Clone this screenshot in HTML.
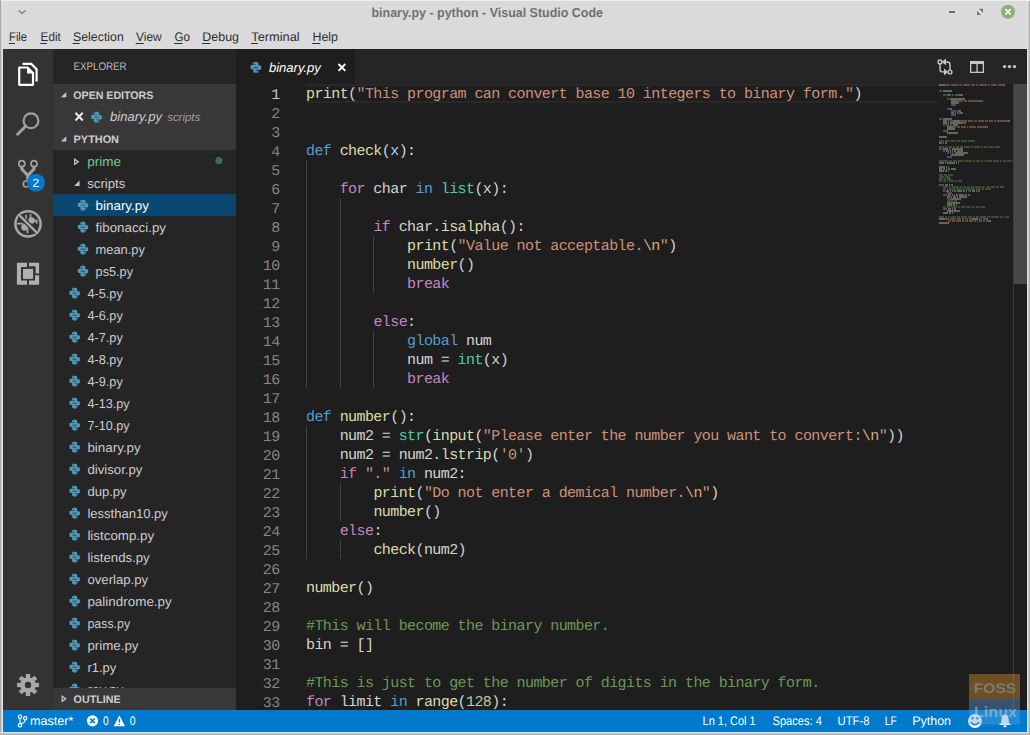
<!DOCTYPE html>
<html><head><meta charset="utf-8"><title>binary.py - python - Visual Studio Code</title>
<style>html,body{margin:0;padding:0;background:#dadada;overflow:hidden;width:1030px;height:735px}svg{display:block}</style>
</head><body>
<svg width="1030" height="735" viewBox="0 0 1030 735" shape-rendering="auto" text-rendering="geometricPrecision">
<rect x="0" y="0" width="1030" height="735" fill="#dadada" />
<rect x="0" y="0" width="1030" height="1" fill="#eef0ee" />
<rect x="0" y="0" width="1" height="735" fill="#a9a9a9" />
<rect x="1" y="1" width="1" height="735" fill="#cfcfcf" />
<rect x="2" y="1" width="1" height="735" fill="#e4e4e4" />
<rect x="1027" y="1" width="1" height="735" fill="#e4e2df" />
<rect x="1028" y="1" width="1" height="735" fill="#cacaca" />
<rect x="1029" y="1" width="1" height="735" fill="#b0b0b0" />
<rect x="0" y="732" width="1028" height="1" fill="#e2e0dd" />
<rect x="0" y="733" width="1030" height="1" fill="#c8c8c8" />
<rect x="0" y="734" width="1030" height="1" fill="#acacac" />
<path d="M18.5 10.5 L22 13.4 L25.5 10.5" stroke="#8a8a8a" stroke-width="1.6" fill="none"/>
<text x="371.5" y="16.5" font-family='"Liberation Sans", sans-serif' font-size="13" fill="#707070" font-weight="bold" font-style="normal" text-anchor="start" textLength="231.5" lengthAdjust="spacingAndGlyphs" >binary.py - python - Visual Studio Code</text>
<rect x="949" y="11" width="6" height="2" fill="#6a6a6a" />
<path d="M977 15 L977 11 L981 15 Z M983 8.7 L983 12.7 L979 8.7 Z" fill="#6f6f6f"/>
<circle cx="1008" cy="11.8" r="7" fill="#8db07b"/>
<path d="M1005.3 9.1 L1010.7 14.5 M1010.7 9.1 L1005.3 14.5" stroke="#fff" stroke-width="1.6"/>
<text x="9.1" y="40.7" font-family='"Liberation Sans", sans-serif' font-size="12.5" fill="#2e2e2e" font-weight="normal" font-style="normal" text-anchor="start" textLength="17.9" lengthAdjust="spacingAndGlyphs" >File</text>
<rect x="8.799999999999999" y="43" width="6.2" height="1" fill="#2e2e2e" />
<text x="40.6" y="40.7" font-family='"Liberation Sans", sans-serif' font-size="12.5" fill="#2e2e2e" font-weight="normal" font-style="normal" text-anchor="start" textLength="20.2" lengthAdjust="spacingAndGlyphs" >Edit</text>
<rect x="40.300000000000004" y="43" width="6.6" height="1" fill="#2e2e2e" />
<text x="73" y="40.7" font-family='"Liberation Sans", sans-serif' font-size="12.5" fill="#2e2e2e" font-weight="normal" font-style="normal" text-anchor="start" textLength="50.8" lengthAdjust="spacingAndGlyphs" >Selection</text>
<rect x="72.7" y="43" width="7" height="1" fill="#2e2e2e" />
<text x="136" y="40.7" font-family='"Liberation Sans", sans-serif' font-size="12.5" fill="#2e2e2e" font-weight="normal" font-style="normal" text-anchor="start" textLength="25.7" lengthAdjust="spacingAndGlyphs" >View</text>
<rect x="135.7" y="43" width="8" height="1" fill="#2e2e2e" />
<text x="174.4" y="40.7" font-family='"Liberation Sans", sans-serif' font-size="12.5" fill="#2e2e2e" font-weight="normal" font-style="normal" text-anchor="start" textLength="15.6" lengthAdjust="spacingAndGlyphs" >Go</text>
<rect x="174.1" y="43" width="8.5" height="1" fill="#2e2e2e" />
<text x="202.3" y="40.7" font-family='"Liberation Sans", sans-serif' font-size="12.5" fill="#2e2e2e" font-weight="normal" font-style="normal" text-anchor="start" textLength="36.7" lengthAdjust="spacingAndGlyphs" >Debug</text>
<rect x="202.0" y="43" width="8.5" height="1" fill="#2e2e2e" />
<text x="251.3" y="40.7" font-family='"Liberation Sans", sans-serif' font-size="12.5" fill="#2e2e2e" font-weight="normal" font-style="normal" text-anchor="start" textLength="48.4" lengthAdjust="spacingAndGlyphs" >Terminal</text>
<rect x="251.0" y="43" width="7" height="1" fill="#2e2e2e" />
<text x="312.5" y="40.7" font-family='"Liberation Sans", sans-serif' font-size="12.5" fill="#2e2e2e" font-weight="normal" font-style="normal" text-anchor="start" textLength="25.5" lengthAdjust="spacingAndGlyphs" >Help</text>
<rect x="312.2" y="43" width="8" height="1" fill="#2e2e2e" />
<rect x="3" y="49" width="1024" height="683" fill="#1e1e1e" />
<rect x="3" y="49" width="50" height="661" fill="#333333" />
<rect x="53" y="49" width="183" height="661" fill="#252526" />
<rect x="236" y="49" width="791" height="35" fill="#252526" />
<rect x="236" y="49" width="119" height="35" fill="#1e1e1e" />
<rect x="3" y="710" width="1024" height="22" fill="#007acc" />
<rect x="306" y="84" width="633" height="2" fill="#282828" />
<rect x="306" y="101" width="633" height="2" fill="#282828" />
<rect x="306" y="160" width="1" height="228" fill="#404040" />
<rect x="340" y="198" width="1" height="190" fill="#404040" />
<rect x="373" y="236" width="1" height="57" fill="#404040" />
<rect x="373" y="331" width="1" height="57" fill="#404040" />
<rect x="306" y="426" width="1" height="133" fill="#404040" />
<rect x="340" y="483" width="1" height="38" fill="#404040" />
<rect x="340" y="540" width="1" height="19" fill="#404040" />
<text x="279.6" y="98.6" font-family='"Liberation Mono", monospace' font-size="15" fill="#c6c6c6" font-weight="normal" font-style="normal" text-anchor="end" letter-spacing="-0.58">1</text>
<text x="279.6" y="117.6" font-family='"Liberation Mono", monospace' font-size="15" fill="#858585" font-weight="normal" font-style="normal" text-anchor="end" letter-spacing="-0.58">2</text>
<text x="279.6" y="136.6" font-family='"Liberation Mono", monospace' font-size="15" fill="#858585" font-weight="normal" font-style="normal" text-anchor="end" letter-spacing="-0.58">3</text>
<text x="279.6" y="155.6" font-family='"Liberation Mono", monospace' font-size="15" fill="#858585" font-weight="normal" font-style="normal" text-anchor="end" letter-spacing="-0.58">4</text>
<text x="279.6" y="174.6" font-family='"Liberation Mono", monospace' font-size="15" fill="#858585" font-weight="normal" font-style="normal" text-anchor="end" letter-spacing="-0.58">5</text>
<text x="279.6" y="193.6" font-family='"Liberation Mono", monospace' font-size="15" fill="#858585" font-weight="normal" font-style="normal" text-anchor="end" letter-spacing="-0.58">6</text>
<text x="279.6" y="212.6" font-family='"Liberation Mono", monospace' font-size="15" fill="#858585" font-weight="normal" font-style="normal" text-anchor="end" letter-spacing="-0.58">7</text>
<text x="279.6" y="231.6" font-family='"Liberation Mono", monospace' font-size="15" fill="#858585" font-weight="normal" font-style="normal" text-anchor="end" letter-spacing="-0.58">8</text>
<text x="279.6" y="250.6" font-family='"Liberation Mono", monospace' font-size="15" fill="#858585" font-weight="normal" font-style="normal" text-anchor="end" letter-spacing="-0.58">9</text>
<text x="279.6" y="269.6" font-family='"Liberation Mono", monospace' font-size="15" fill="#858585" font-weight="normal" font-style="normal" text-anchor="end" letter-spacing="-0.58">10</text>
<text x="279.6" y="288.6" font-family='"Liberation Mono", monospace' font-size="15" fill="#858585" font-weight="normal" font-style="normal" text-anchor="end" letter-spacing="-0.58">11</text>
<text x="279.6" y="307.6" font-family='"Liberation Mono", monospace' font-size="15" fill="#858585" font-weight="normal" font-style="normal" text-anchor="end" letter-spacing="-0.58">12</text>
<text x="279.6" y="326.6" font-family='"Liberation Mono", monospace' font-size="15" fill="#858585" font-weight="normal" font-style="normal" text-anchor="end" letter-spacing="-0.58">13</text>
<text x="279.6" y="345.6" font-family='"Liberation Mono", monospace' font-size="15" fill="#858585" font-weight="normal" font-style="normal" text-anchor="end" letter-spacing="-0.58">14</text>
<text x="279.6" y="364.6" font-family='"Liberation Mono", monospace' font-size="15" fill="#858585" font-weight="normal" font-style="normal" text-anchor="end" letter-spacing="-0.58">15</text>
<text x="279.6" y="383.6" font-family='"Liberation Mono", monospace' font-size="15" fill="#858585" font-weight="normal" font-style="normal" text-anchor="end" letter-spacing="-0.58">16</text>
<text x="279.6" y="402.6" font-family='"Liberation Mono", monospace' font-size="15" fill="#858585" font-weight="normal" font-style="normal" text-anchor="end" letter-spacing="-0.58">17</text>
<text x="279.6" y="421.6" font-family='"Liberation Mono", monospace' font-size="15" fill="#858585" font-weight="normal" font-style="normal" text-anchor="end" letter-spacing="-0.58">18</text>
<text x="279.6" y="440.6" font-family='"Liberation Mono", monospace' font-size="15" fill="#858585" font-weight="normal" font-style="normal" text-anchor="end" letter-spacing="-0.58">19</text>
<text x="279.6" y="459.6" font-family='"Liberation Mono", monospace' font-size="15" fill="#858585" font-weight="normal" font-style="normal" text-anchor="end" letter-spacing="-0.58">20</text>
<text x="279.6" y="478.6" font-family='"Liberation Mono", monospace' font-size="15" fill="#858585" font-weight="normal" font-style="normal" text-anchor="end" letter-spacing="-0.58">21</text>
<text x="279.6" y="497.6" font-family='"Liberation Mono", monospace' font-size="15" fill="#858585" font-weight="normal" font-style="normal" text-anchor="end" letter-spacing="-0.58">22</text>
<text x="279.6" y="516.6" font-family='"Liberation Mono", monospace' font-size="15" fill="#858585" font-weight="normal" font-style="normal" text-anchor="end" letter-spacing="-0.58">23</text>
<text x="279.6" y="535.6" font-family='"Liberation Mono", monospace' font-size="15" fill="#858585" font-weight="normal" font-style="normal" text-anchor="end" letter-spacing="-0.58">24</text>
<text x="279.6" y="554.6" font-family='"Liberation Mono", monospace' font-size="15" fill="#858585" font-weight="normal" font-style="normal" text-anchor="end" letter-spacing="-0.58">25</text>
<text x="279.6" y="573.6" font-family='"Liberation Mono", monospace' font-size="15" fill="#858585" font-weight="normal" font-style="normal" text-anchor="end" letter-spacing="-0.58">26</text>
<text x="279.6" y="592.6" font-family='"Liberation Mono", monospace' font-size="15" fill="#858585" font-weight="normal" font-style="normal" text-anchor="end" letter-spacing="-0.58">27</text>
<text x="279.6" y="611.6" font-family='"Liberation Mono", monospace' font-size="15" fill="#858585" font-weight="normal" font-style="normal" text-anchor="end" letter-spacing="-0.58">28</text>
<text x="279.6" y="630.6" font-family='"Liberation Mono", monospace' font-size="15" fill="#858585" font-weight="normal" font-style="normal" text-anchor="end" letter-spacing="-0.58">29</text>
<text x="279.6" y="649.6" font-family='"Liberation Mono", monospace' font-size="15" fill="#858585" font-weight="normal" font-style="normal" text-anchor="end" letter-spacing="-0.58">30</text>
<text x="279.6" y="668.6" font-family='"Liberation Mono", monospace' font-size="15" fill="#858585" font-weight="normal" font-style="normal" text-anchor="end" letter-spacing="-0.58">31</text>
<text x="279.6" y="687.6" font-family='"Liberation Mono", monospace' font-size="15" fill="#858585" font-weight="normal" font-style="normal" text-anchor="end" letter-spacing="-0.58">32</text>
<text x="279.6" y="706.6" font-family='"Liberation Mono", monospace' font-size="15" fill="#858585" font-weight="normal" font-style="normal" text-anchor="end" letter-spacing="-0.58">33</text>
<text x="306" y="97.9" font-family='"Liberation Mono", monospace' font-size="15" letter-spacing="-0.58" xml:space="preserve" style="white-space:pre"><tspan fill="#dcdcaa">print</tspan><tspan fill="#d4d4d4">(</tspan><tspan fill="#ce9178">"This program can convert base 10 integers to binary form."</tspan><tspan fill="#d4d4d4">)</tspan></text>
<text x="306" y="154.9" font-family='"Liberation Mono", monospace' font-size="15" letter-spacing="-0.58" xml:space="preserve" style="white-space:pre"><tspan fill="#569cd6">def</tspan><tspan fill="#d4d4d4"> </tspan><tspan fill="#dcdcaa">check</tspan><tspan fill="#d4d4d4">(</tspan><tspan fill="#9cdcfe">x</tspan><tspan fill="#d4d4d4">):</tspan></text>
<text x="306" y="192.9" font-family='"Liberation Mono", monospace' font-size="15" letter-spacing="-0.58" xml:space="preserve" style="white-space:pre"><tspan fill="#d4d4d4">    </tspan><tspan fill="#c586c0">for</tspan><tspan fill="#d4d4d4"> char </tspan><tspan fill="#569cd6">in</tspan><tspan fill="#d4d4d4"> </tspan><tspan fill="#4ec9b0">list</tspan><tspan fill="#d4d4d4">(x):</tspan></text>
<text x="306" y="230.9" font-family='"Liberation Mono", monospace' font-size="15" letter-spacing="-0.58" xml:space="preserve" style="white-space:pre"><tspan fill="#d4d4d4">        </tspan><tspan fill="#c586c0">if</tspan><tspan fill="#d4d4d4"> char.</tspan><tspan fill="#dcdcaa">isalpha</tspan><tspan fill="#d4d4d4">():</tspan></text>
<text x="306" y="249.9" font-family='"Liberation Mono", monospace' font-size="15" letter-spacing="-0.58" xml:space="preserve" style="white-space:pre"><tspan fill="#d4d4d4">            </tspan><tspan fill="#dcdcaa">print</tspan><tspan fill="#d4d4d4">(</tspan><tspan fill="#ce9178">"Value not acceptable.</tspan><tspan fill="#d9aa7a">\n</tspan><tspan fill="#ce9178">"</tspan><tspan fill="#d4d4d4">)</tspan></text>
<text x="306" y="268.9" font-family='"Liberation Mono", monospace' font-size="15" letter-spacing="-0.58" xml:space="preserve" style="white-space:pre"><tspan fill="#d4d4d4">            </tspan><tspan fill="#dcdcaa">number</tspan><tspan fill="#d4d4d4">()</tspan></text>
<text x="306" y="287.9" font-family='"Liberation Mono", monospace' font-size="15" letter-spacing="-0.58" xml:space="preserve" style="white-space:pre"><tspan fill="#d4d4d4">            </tspan><tspan fill="#c586c0">break</tspan></text>
<text x="306" y="325.9" font-family='"Liberation Mono", monospace' font-size="15" letter-spacing="-0.58" xml:space="preserve" style="white-space:pre"><tspan fill="#d4d4d4">        </tspan><tspan fill="#c586c0">else</tspan><tspan fill="#d4d4d4">:</tspan></text>
<text x="306" y="344.9" font-family='"Liberation Mono", monospace' font-size="15" letter-spacing="-0.58" xml:space="preserve" style="white-space:pre"><tspan fill="#d4d4d4">            </tspan><tspan fill="#569cd6">global</tspan><tspan fill="#d4d4d4"> num</tspan></text>
<text x="306" y="363.9" font-family='"Liberation Mono", monospace' font-size="15" letter-spacing="-0.58" xml:space="preserve" style="white-space:pre"><tspan fill="#d4d4d4">            </tspan><tspan fill="#d4d4d4">num = </tspan><tspan fill="#4ec9b0">int</tspan><tspan fill="#d4d4d4">(x)</tspan></text>
<text x="306" y="382.9" font-family='"Liberation Mono", monospace' font-size="15" letter-spacing="-0.58" xml:space="preserve" style="white-space:pre"><tspan fill="#d4d4d4">            </tspan><tspan fill="#c586c0">break</tspan></text>
<text x="306" y="420.9" font-family='"Liberation Mono", monospace' font-size="15" letter-spacing="-0.58" xml:space="preserve" style="white-space:pre"><tspan fill="#569cd6">def</tspan><tspan fill="#d4d4d4"> </tspan><tspan fill="#dcdcaa">number</tspan><tspan fill="#d4d4d4">():</tspan></text>
<text x="306" y="439.9" font-family='"Liberation Mono", monospace' font-size="15" letter-spacing="-0.58" xml:space="preserve" style="white-space:pre"><tspan fill="#d4d4d4">    num2 = </tspan><tspan fill="#4ec9b0">str</tspan><tspan fill="#d4d4d4">(</tspan><tspan fill="#dcdcaa">input</tspan><tspan fill="#d4d4d4">(</tspan><tspan fill="#ce9178">"Please enter the number you want to convert:</tspan><tspan fill="#d9aa7a">\n</tspan><tspan fill="#ce9178">"</tspan><tspan fill="#d4d4d4">))</tspan></text>
<text x="306" y="458.9" font-family='"Liberation Mono", monospace' font-size="15" letter-spacing="-0.58" xml:space="preserve" style="white-space:pre"><tspan fill="#d4d4d4">    num2 = num2.</tspan><tspan fill="#dcdcaa">lstrip</tspan><tspan fill="#d4d4d4">(</tspan><tspan fill="#ce9178">'0'</tspan><tspan fill="#d4d4d4">)</tspan></text>
<text x="306" y="477.9" font-family='"Liberation Mono", monospace' font-size="15" letter-spacing="-0.58" xml:space="preserve" style="white-space:pre"><tspan fill="#d4d4d4">    </tspan><tspan fill="#c586c0">if</tspan><tspan fill="#d4d4d4"> </tspan><tspan fill="#ce9178">"."</tspan><tspan fill="#d4d4d4"> </tspan><tspan fill="#569cd6">in</tspan><tspan fill="#d4d4d4"> num2:</tspan></text>
<text x="306" y="496.9" font-family='"Liberation Mono", monospace' font-size="15" letter-spacing="-0.58" xml:space="preserve" style="white-space:pre"><tspan fill="#d4d4d4">        </tspan><tspan fill="#dcdcaa">print</tspan><tspan fill="#d4d4d4">(</tspan><tspan fill="#ce9178">"Do not enter a demical number.</tspan><tspan fill="#d9aa7a">\n</tspan><tspan fill="#ce9178">"</tspan><tspan fill="#d4d4d4">)</tspan></text>
<text x="306" y="515.9" font-family='"Liberation Mono", monospace' font-size="15" letter-spacing="-0.58" xml:space="preserve" style="white-space:pre"><tspan fill="#d4d4d4">        </tspan><tspan fill="#dcdcaa">number</tspan><tspan fill="#d4d4d4">()</tspan></text>
<text x="306" y="534.9" font-family='"Liberation Mono", monospace' font-size="15" letter-spacing="-0.58" xml:space="preserve" style="white-space:pre"><tspan fill="#d4d4d4">    </tspan><tspan fill="#c586c0">else</tspan><tspan fill="#d4d4d4">:</tspan></text>
<text x="306" y="553.9" font-family='"Liberation Mono", monospace' font-size="15" letter-spacing="-0.58" xml:space="preserve" style="white-space:pre"><tspan fill="#d4d4d4">        </tspan><tspan fill="#dcdcaa">check</tspan><tspan fill="#d4d4d4">(num2)</tspan></text>
<text x="306" y="591.9" font-family='"Liberation Mono", monospace' font-size="15" letter-spacing="-0.58" xml:space="preserve" style="white-space:pre"><tspan fill="#dcdcaa">number</tspan><tspan fill="#d4d4d4">()</tspan></text>
<text x="306" y="629.9" font-family='"Liberation Mono", monospace' font-size="15" letter-spacing="-0.58" xml:space="preserve" style="white-space:pre"><tspan fill="#6a9955">#This will become the binary number.</tspan></text>
<text x="306" y="648.9" font-family='"Liberation Mono", monospace' font-size="15" letter-spacing="-0.58" xml:space="preserve" style="white-space:pre"><tspan fill="#d4d4d4">bin = []</tspan></text>
<text x="306" y="686.9" font-family='"Liberation Mono", monospace' font-size="15" letter-spacing="-0.58" xml:space="preserve" style="white-space:pre"><tspan fill="#6a9955">#This is just to get the number of digits in the binary form.</tspan></text>
<text x="306" y="705.9" font-family='"Liberation Mono", monospace' font-size="15" letter-spacing="-0.58" xml:space="preserve" style="white-space:pre"><tspan fill="#c586c0">for</tspan><tspan fill="#d4d4d4"> limit </tspan><tspan fill="#569cd6">in</tspan><tspan fill="#d4d4d4"> </tspan><tspan fill="#dcdcaa">range</tspan><tspan fill="#d4d4d4">(</tspan><tspan fill="#b5cea8">128</tspan><tspan fill="#d4d4d4">):</tspan></text>
<g transform="translate(250.5,62) scale(1.0)" fill="#519aba"><path d="M2.5 1.6 Q2.5 0 4.1 0 H6.3 Q7.9 0 7.9 1.6 V5.0 H3.2 V7.3 H1.4 Q0 7.3 0 5.9 V4.4 Q0 3.0 1.4 3.0 H5.6 V2.4 H2.5 Z"/><path d="M2.5 1.6 Q2.5 0 4.1 0 H6.3 Q7.9 0 7.9 1.6 V5.0 H3.2 V7.3 H1.4 Q0 7.3 0 5.9 V4.4 Q0 3.0 1.4 3.0 H5.6 V2.4 H2.5 Z" transform="rotate(180 5.35 5.4)"/><circle cx="3.9" cy="1.2" r="0.55" fill="#1e1e1e" fill-opacity="0.6"/><circle cx="6.8" cy="9.6" r="0.55" fill="#1e1e1e" fill-opacity="0.6"/></g>
<text x="268.9" y="72.2" font-family='"Liberation Sans", sans-serif' font-size="13" fill="#ffffff" font-weight="normal" font-style="italic" text-anchor="start" textLength="52" lengthAdjust="spacingAndGlyphs" >binary.py</text>
<path d="M338.5 64 L345.3 70.8 M345.3 64 L338.5 70.8" stroke="#ffffff" stroke-width="1.8"/>
<g stroke="#c5c5c5" stroke-width="1.4" fill="none"><circle cx="940" cy="61.9" r="1.9"/><circle cx="950" cy="72" r="1.9"/><path d="M940 63.8 V69.2 Q940 71.9 942.7 71.9 H944.5"/><path d="M950 70.1 V64.7 Q950 62 947.3 62 H945.5"/></g>
<path d="M944 68.6 L948.2 71.9 L944 75.2 Z M946 58.6 L941.8 61.9 L946 65.2 Z" fill="#c5c5c5"/>
<g fill="#c5c5c5"><rect x="970" y="61" width="14" height="3"/><rect x="970" y="61" width="1.3" height="12"/><rect x="982.7" y="61" width="1.3" height="12"/><rect x="970" y="71.7" width="14" height="1.3"/><rect x="976.4" y="61" width="1.3" height="12"/></g>
<circle cx="1004.5" cy="66.6" r="1.7" fill="#c5c5c5"/>
<circle cx="1009.5" cy="66.6" r="1.7" fill="#c5c5c5"/>
<circle cx="1014.5" cy="66.6" r="1.7" fill="#c5c5c5"/>
<rect x="1013" y="84" width="14" height="200" fill="#474747" />
<rect x="1013" y="84" width="1" height="626" fill="#3c3c3c" />
<text x="73.4" y="70.2" font-family='"Liberation Sans", sans-serif' font-size="11" fill="#bbbbbb" font-weight="normal" font-style="normal" text-anchor="start" textLength="53.3" lengthAdjust="spacingAndGlyphs" >EXPLORER</text>
<rect x="53" y="84" width="183" height="66" fill="#383838" />
<rect x="53" y="688" width="183" height="22" fill="#383838" />
<path d="M66.3 92 L66.3 97.3 L61 97.3 Z" fill="#c5c5c5"/>
<text x="73.3" y="99" font-family='"Liberation Sans", sans-serif' font-size="11" fill="#cccccc" font-weight="bold" font-style="normal" text-anchor="start" textLength="80" lengthAdjust="spacingAndGlyphs" >OPEN EDITORS</text>
<path d="M75.5 112.8 L82.7 120.5 M82.7 112.8 L75.5 120.5" stroke="#e8e8e8" stroke-width="2"/>
<g transform="translate(91.2,111.8) scale(1.0)" fill="#519aba"><path d="M2.5 1.6 Q2.5 0 4.1 0 H6.3 Q7.9 0 7.9 1.6 V5.0 H3.2 V7.3 H1.4 Q0 7.3 0 5.9 V4.4 Q0 3.0 1.4 3.0 H5.6 V2.4 H2.5 Z"/><path d="M2.5 1.6 Q2.5 0 4.1 0 H6.3 Q7.9 0 7.9 1.6 V5.0 H3.2 V7.3 H1.4 Q0 7.3 0 5.9 V4.4 Q0 3.0 1.4 3.0 H5.6 V2.4 H2.5 Z" transform="rotate(180 5.35 5.4)"/><circle cx="3.9" cy="1.2" r="0.55" fill="#1e1e1e" fill-opacity="0.6"/><circle cx="6.8" cy="9.6" r="0.55" fill="#1e1e1e" fill-opacity="0.6"/></g>
<text x="110.1" y="121.3" font-family='"Liberation Sans", sans-serif' font-size="13" fill="#cccccc" font-weight="normal" font-style="italic" text-anchor="start" textLength="51.8" lengthAdjust="spacingAndGlyphs" >binary.py</text>
<text x="167.2" y="121.3" font-family='"Liberation Sans", sans-serif' font-size="11.5" fill="#9d9d9d" font-weight="normal" font-style="italic" text-anchor="start" textLength="33" lengthAdjust="spacingAndGlyphs" >scripts</text>
<path d="M66.3 136.3 L66.3 141.60000000000002 L61 141.60000000000002 Z" fill="#c5c5c5"/>
<text x="73.6" y="143" font-family='"Liberation Sans", sans-serif' font-size="11" fill="#cccccc" font-weight="bold" font-style="normal" text-anchor="start" textLength="45.4" lengthAdjust="spacingAndGlyphs" >PYTHON</text>
<clipPath id="treeclip"><rect x="53" y="150" width="183" height="538"/></clipPath>
<g clip-path="url(#treeclip)">
<path d="M74.7 159.2 L78.3 161.75 L74.7 164.3 Z" fill="none" stroke="#c5c5c5" stroke-width="1.3"/>
<text x="87.3" y="166" font-family='"Liberation Sans", sans-serif' font-size="13" fill="#73c991" font-weight="normal" font-style="normal" text-anchor="start" textLength="33.8" lengthAdjust="spacingAndGlyphs" >prime</text>
<circle cx="219" cy="160.7" r="3.6" fill="#3a6f4b"/>
<path d="M79.5 180.6 L79.5 185.9 L74.2 185.9 Z" fill="#c5c5c5"/>
<text x="87.3" y="188" font-family='"Liberation Sans", sans-serif' font-size="13" fill="#cccccc" font-weight="normal" font-style="normal" text-anchor="start" textLength="38" lengthAdjust="spacingAndGlyphs" >scripts</text>
<rect x="53" y="194" width="183" height="22" fill="#094771" />
<g transform="translate(77.7,199.8) scale(0.9818181818181819)" fill="#519aba"><path d="M2.5 1.6 Q2.5 0 4.1 0 H6.3 Q7.9 0 7.9 1.6 V5.0 H3.2 V7.3 H1.4 Q0 7.3 0 5.9 V4.4 Q0 3.0 1.4 3.0 H5.6 V2.4 H2.5 Z"/><path d="M2.5 1.6 Q2.5 0 4.1 0 H6.3 Q7.9 0 7.9 1.6 V5.0 H3.2 V7.3 H1.4 Q0 7.3 0 5.9 V4.4 Q0 3.0 1.4 3.0 H5.6 V2.4 H2.5 Z" transform="rotate(180 5.35 5.4)"/><circle cx="3.9" cy="1.2" r="0.55" fill="#1e1e1e" fill-opacity="0.6"/><circle cx="6.8" cy="9.6" r="0.55" fill="#1e1e1e" fill-opacity="0.6"/></g>
<text x="95.6" y="210" font-family='"Liberation Sans", sans-serif' font-size="13" fill="#ffffff" font-weight="normal" font-style="normal" text-anchor="start" textLength="53.3" lengthAdjust="spacingAndGlyphs" >binary.py</text>
<g transform="translate(77.7,221.8) scale(0.9818181818181819)" fill="#519aba"><path d="M2.5 1.6 Q2.5 0 4.1 0 H6.3 Q7.9 0 7.9 1.6 V5.0 H3.2 V7.3 H1.4 Q0 7.3 0 5.9 V4.4 Q0 3.0 1.4 3.0 H5.6 V2.4 H2.5 Z"/><path d="M2.5 1.6 Q2.5 0 4.1 0 H6.3 Q7.9 0 7.9 1.6 V5.0 H3.2 V7.3 H1.4 Q0 7.3 0 5.9 V4.4 Q0 3.0 1.4 3.0 H5.6 V2.4 H2.5 Z" transform="rotate(180 5.35 5.4)"/><circle cx="3.9" cy="1.2" r="0.55" fill="#1e1e1e" fill-opacity="0.6"/><circle cx="6.8" cy="9.6" r="0.55" fill="#1e1e1e" fill-opacity="0.6"/></g>
<text x="95.6" y="232" font-family='"Liberation Sans", sans-serif' font-size="13" fill="#cccccc" font-weight="normal" font-style="normal" text-anchor="start" textLength="70.4" lengthAdjust="spacingAndGlyphs" >fibonacci.py</text>
<g transform="translate(77.7,243.8) scale(0.9818181818181819)" fill="#519aba"><path d="M2.5 1.6 Q2.5 0 4.1 0 H6.3 Q7.9 0 7.9 1.6 V5.0 H3.2 V7.3 H1.4 Q0 7.3 0 5.9 V4.4 Q0 3.0 1.4 3.0 H5.6 V2.4 H2.5 Z"/><path d="M2.5 1.6 Q2.5 0 4.1 0 H6.3 Q7.9 0 7.9 1.6 V5.0 H3.2 V7.3 H1.4 Q0 7.3 0 5.9 V4.4 Q0 3.0 1.4 3.0 H5.6 V2.4 H2.5 Z" transform="rotate(180 5.35 5.4)"/><circle cx="3.9" cy="1.2" r="0.55" fill="#1e1e1e" fill-opacity="0.6"/><circle cx="6.8" cy="9.6" r="0.55" fill="#1e1e1e" fill-opacity="0.6"/></g>
<text x="95.6" y="254" font-family='"Liberation Sans", sans-serif' font-size="13" fill="#cccccc" font-weight="normal" font-style="normal" text-anchor="start" textLength="49.3" lengthAdjust="spacingAndGlyphs" >mean.py</text>
<g transform="translate(77.7,265.8) scale(0.9818181818181819)" fill="#519aba"><path d="M2.5 1.6 Q2.5 0 4.1 0 H6.3 Q7.9 0 7.9 1.6 V5.0 H3.2 V7.3 H1.4 Q0 7.3 0 5.9 V4.4 Q0 3.0 1.4 3.0 H5.6 V2.4 H2.5 Z"/><path d="M2.5 1.6 Q2.5 0 4.1 0 H6.3 Q7.9 0 7.9 1.6 V5.0 H3.2 V7.3 H1.4 Q0 7.3 0 5.9 V4.4 Q0 3.0 1.4 3.0 H5.6 V2.4 H2.5 Z" transform="rotate(180 5.35 5.4)"/><circle cx="3.9" cy="1.2" r="0.55" fill="#1e1e1e" fill-opacity="0.6"/><circle cx="6.8" cy="9.6" r="0.55" fill="#1e1e1e" fill-opacity="0.6"/></g>
<text x="95.6" y="276" font-family='"Liberation Sans", sans-serif' font-size="13" fill="#cccccc" font-weight="normal" font-style="normal" text-anchor="start" textLength="37.4" lengthAdjust="spacingAndGlyphs" >ps5.py</text>
<g transform="translate(69.4,287.8) scale(0.9818181818181819)" fill="#519aba"><path d="M2.5 1.6 Q2.5 0 4.1 0 H6.3 Q7.9 0 7.9 1.6 V5.0 H3.2 V7.3 H1.4 Q0 7.3 0 5.9 V4.4 Q0 3.0 1.4 3.0 H5.6 V2.4 H2.5 Z"/><path d="M2.5 1.6 Q2.5 0 4.1 0 H6.3 Q7.9 0 7.9 1.6 V5.0 H3.2 V7.3 H1.4 Q0 7.3 0 5.9 V4.4 Q0 3.0 1.4 3.0 H5.6 V2.4 H2.5 Z" transform="rotate(180 5.35 5.4)"/><circle cx="3.9" cy="1.2" r="0.55" fill="#1e1e1e" fill-opacity="0.6"/><circle cx="6.8" cy="9.6" r="0.55" fill="#1e1e1e" fill-opacity="0.6"/></g>
<text x="87.4" y="298" font-family='"Liberation Sans", sans-serif' font-size="13" fill="#cccccc" font-weight="normal" font-style="normal" text-anchor="start" textLength="35.4" lengthAdjust="spacingAndGlyphs" >4-5.py</text>
<g transform="translate(69.4,309.8) scale(0.9818181818181819)" fill="#519aba"><path d="M2.5 1.6 Q2.5 0 4.1 0 H6.3 Q7.9 0 7.9 1.6 V5.0 H3.2 V7.3 H1.4 Q0 7.3 0 5.9 V4.4 Q0 3.0 1.4 3.0 H5.6 V2.4 H2.5 Z"/><path d="M2.5 1.6 Q2.5 0 4.1 0 H6.3 Q7.9 0 7.9 1.6 V5.0 H3.2 V7.3 H1.4 Q0 7.3 0 5.9 V4.4 Q0 3.0 1.4 3.0 H5.6 V2.4 H2.5 Z" transform="rotate(180 5.35 5.4)"/><circle cx="3.9" cy="1.2" r="0.55" fill="#1e1e1e" fill-opacity="0.6"/><circle cx="6.8" cy="9.6" r="0.55" fill="#1e1e1e" fill-opacity="0.6"/></g>
<text x="87.4" y="320" font-family='"Liberation Sans", sans-serif' font-size="13" fill="#cccccc" font-weight="normal" font-style="normal" text-anchor="start" textLength="35.4" lengthAdjust="spacingAndGlyphs" >4-6.py</text>
<g transform="translate(69.4,331.8) scale(0.9818181818181819)" fill="#519aba"><path d="M2.5 1.6 Q2.5 0 4.1 0 H6.3 Q7.9 0 7.9 1.6 V5.0 H3.2 V7.3 H1.4 Q0 7.3 0 5.9 V4.4 Q0 3.0 1.4 3.0 H5.6 V2.4 H2.5 Z"/><path d="M2.5 1.6 Q2.5 0 4.1 0 H6.3 Q7.9 0 7.9 1.6 V5.0 H3.2 V7.3 H1.4 Q0 7.3 0 5.9 V4.4 Q0 3.0 1.4 3.0 H5.6 V2.4 H2.5 Z" transform="rotate(180 5.35 5.4)"/><circle cx="3.9" cy="1.2" r="0.55" fill="#1e1e1e" fill-opacity="0.6"/><circle cx="6.8" cy="9.6" r="0.55" fill="#1e1e1e" fill-opacity="0.6"/></g>
<text x="87.4" y="342" font-family='"Liberation Sans", sans-serif' font-size="13" fill="#cccccc" font-weight="normal" font-style="normal" text-anchor="start" textLength="35.4" lengthAdjust="spacingAndGlyphs" >4-7.py</text>
<g transform="translate(69.4,353.8) scale(0.9818181818181819)" fill="#519aba"><path d="M2.5 1.6 Q2.5 0 4.1 0 H6.3 Q7.9 0 7.9 1.6 V5.0 H3.2 V7.3 H1.4 Q0 7.3 0 5.9 V4.4 Q0 3.0 1.4 3.0 H5.6 V2.4 H2.5 Z"/><path d="M2.5 1.6 Q2.5 0 4.1 0 H6.3 Q7.9 0 7.9 1.6 V5.0 H3.2 V7.3 H1.4 Q0 7.3 0 5.9 V4.4 Q0 3.0 1.4 3.0 H5.6 V2.4 H2.5 Z" transform="rotate(180 5.35 5.4)"/><circle cx="3.9" cy="1.2" r="0.55" fill="#1e1e1e" fill-opacity="0.6"/><circle cx="6.8" cy="9.6" r="0.55" fill="#1e1e1e" fill-opacity="0.6"/></g>
<text x="87.4" y="364" font-family='"Liberation Sans", sans-serif' font-size="13" fill="#cccccc" font-weight="normal" font-style="normal" text-anchor="start" textLength="35.4" lengthAdjust="spacingAndGlyphs" >4-8.py</text>
<g transform="translate(69.4,375.8) scale(0.9818181818181819)" fill="#519aba"><path d="M2.5 1.6 Q2.5 0 4.1 0 H6.3 Q7.9 0 7.9 1.6 V5.0 H3.2 V7.3 H1.4 Q0 7.3 0 5.9 V4.4 Q0 3.0 1.4 3.0 H5.6 V2.4 H2.5 Z"/><path d="M2.5 1.6 Q2.5 0 4.1 0 H6.3 Q7.9 0 7.9 1.6 V5.0 H3.2 V7.3 H1.4 Q0 7.3 0 5.9 V4.4 Q0 3.0 1.4 3.0 H5.6 V2.4 H2.5 Z" transform="rotate(180 5.35 5.4)"/><circle cx="3.9" cy="1.2" r="0.55" fill="#1e1e1e" fill-opacity="0.6"/><circle cx="6.8" cy="9.6" r="0.55" fill="#1e1e1e" fill-opacity="0.6"/></g>
<text x="87.4" y="386" font-family='"Liberation Sans", sans-serif' font-size="13" fill="#cccccc" font-weight="normal" font-style="normal" text-anchor="start" textLength="35.4" lengthAdjust="spacingAndGlyphs" >4-9.py</text>
<g transform="translate(69.4,397.8) scale(0.9818181818181819)" fill="#519aba"><path d="M2.5 1.6 Q2.5 0 4.1 0 H6.3 Q7.9 0 7.9 1.6 V5.0 H3.2 V7.3 H1.4 Q0 7.3 0 5.9 V4.4 Q0 3.0 1.4 3.0 H5.6 V2.4 H2.5 Z"/><path d="M2.5 1.6 Q2.5 0 4.1 0 H6.3 Q7.9 0 7.9 1.6 V5.0 H3.2 V7.3 H1.4 Q0 7.3 0 5.9 V4.4 Q0 3.0 1.4 3.0 H5.6 V2.4 H2.5 Z" transform="rotate(180 5.35 5.4)"/><circle cx="3.9" cy="1.2" r="0.55" fill="#1e1e1e" fill-opacity="0.6"/><circle cx="6.8" cy="9.6" r="0.55" fill="#1e1e1e" fill-opacity="0.6"/></g>
<text x="87.4" y="408" font-family='"Liberation Sans", sans-serif' font-size="13" fill="#cccccc" font-weight="normal" font-style="normal" text-anchor="start" textLength="42.2" lengthAdjust="spacingAndGlyphs" >4-13.py</text>
<g transform="translate(69.4,419.8) scale(0.9818181818181819)" fill="#519aba"><path d="M2.5 1.6 Q2.5 0 4.1 0 H6.3 Q7.9 0 7.9 1.6 V5.0 H3.2 V7.3 H1.4 Q0 7.3 0 5.9 V4.4 Q0 3.0 1.4 3.0 H5.6 V2.4 H2.5 Z"/><path d="M2.5 1.6 Q2.5 0 4.1 0 H6.3 Q7.9 0 7.9 1.6 V5.0 H3.2 V7.3 H1.4 Q0 7.3 0 5.9 V4.4 Q0 3.0 1.4 3.0 H5.6 V2.4 H2.5 Z" transform="rotate(180 5.35 5.4)"/><circle cx="3.9" cy="1.2" r="0.55" fill="#1e1e1e" fill-opacity="0.6"/><circle cx="6.8" cy="9.6" r="0.55" fill="#1e1e1e" fill-opacity="0.6"/></g>
<text x="87.4" y="430" font-family='"Liberation Sans", sans-serif' font-size="13" fill="#cccccc" font-weight="normal" font-style="normal" text-anchor="start" textLength="42.2" lengthAdjust="spacingAndGlyphs" >7-10.py</text>
<g transform="translate(69.4,441.8) scale(0.9818181818181819)" fill="#519aba"><path d="M2.5 1.6 Q2.5 0 4.1 0 H6.3 Q7.9 0 7.9 1.6 V5.0 H3.2 V7.3 H1.4 Q0 7.3 0 5.9 V4.4 Q0 3.0 1.4 3.0 H5.6 V2.4 H2.5 Z"/><path d="M2.5 1.6 Q2.5 0 4.1 0 H6.3 Q7.9 0 7.9 1.6 V5.0 H3.2 V7.3 H1.4 Q0 7.3 0 5.9 V4.4 Q0 3.0 1.4 3.0 H5.6 V2.4 H2.5 Z" transform="rotate(180 5.35 5.4)"/><circle cx="3.9" cy="1.2" r="0.55" fill="#1e1e1e" fill-opacity="0.6"/><circle cx="6.8" cy="9.6" r="0.55" fill="#1e1e1e" fill-opacity="0.6"/></g>
<text x="87.4" y="452" font-family='"Liberation Sans", sans-serif' font-size="13" fill="#cccccc" font-weight="normal" font-style="normal" text-anchor="start" textLength="53.3" lengthAdjust="spacingAndGlyphs" >binary.py</text>
<g transform="translate(69.4,463.8) scale(0.9818181818181819)" fill="#519aba"><path d="M2.5 1.6 Q2.5 0 4.1 0 H6.3 Q7.9 0 7.9 1.6 V5.0 H3.2 V7.3 H1.4 Q0 7.3 0 5.9 V4.4 Q0 3.0 1.4 3.0 H5.6 V2.4 H2.5 Z"/><path d="M2.5 1.6 Q2.5 0 4.1 0 H6.3 Q7.9 0 7.9 1.6 V5.0 H3.2 V7.3 H1.4 Q0 7.3 0 5.9 V4.4 Q0 3.0 1.4 3.0 H5.6 V2.4 H2.5 Z" transform="rotate(180 5.35 5.4)"/><circle cx="3.9" cy="1.2" r="0.55" fill="#1e1e1e" fill-opacity="0.6"/><circle cx="6.8" cy="9.6" r="0.55" fill="#1e1e1e" fill-opacity="0.6"/></g>
<text x="87.4" y="474" font-family='"Liberation Sans", sans-serif' font-size="13" fill="#cccccc" font-weight="normal" font-style="normal" text-anchor="start" textLength="55.1" lengthAdjust="spacingAndGlyphs" >divisor.py</text>
<g transform="translate(69.4,485.8) scale(0.9818181818181819)" fill="#519aba"><path d="M2.5 1.6 Q2.5 0 4.1 0 H6.3 Q7.9 0 7.9 1.6 V5.0 H3.2 V7.3 H1.4 Q0 7.3 0 5.9 V4.4 Q0 3.0 1.4 3.0 H5.6 V2.4 H2.5 Z"/><path d="M2.5 1.6 Q2.5 0 4.1 0 H6.3 Q7.9 0 7.9 1.6 V5.0 H3.2 V7.3 H1.4 Q0 7.3 0 5.9 V4.4 Q0 3.0 1.4 3.0 H5.6 V2.4 H2.5 Z" transform="rotate(180 5.35 5.4)"/><circle cx="3.9" cy="1.2" r="0.55" fill="#1e1e1e" fill-opacity="0.6"/><circle cx="6.8" cy="9.6" r="0.55" fill="#1e1e1e" fill-opacity="0.6"/></g>
<text x="87.4" y="496" font-family='"Liberation Sans", sans-serif' font-size="13" fill="#cccccc" font-weight="normal" font-style="normal" text-anchor="start" textLength="39.2" lengthAdjust="spacingAndGlyphs" >dup.py</text>
<g transform="translate(69.4,507.8) scale(0.9818181818181819)" fill="#519aba"><path d="M2.5 1.6 Q2.5 0 4.1 0 H6.3 Q7.9 0 7.9 1.6 V5.0 H3.2 V7.3 H1.4 Q0 7.3 0 5.9 V4.4 Q0 3.0 1.4 3.0 H5.6 V2.4 H2.5 Z"/><path d="M2.5 1.6 Q2.5 0 4.1 0 H6.3 Q7.9 0 7.9 1.6 V5.0 H3.2 V7.3 H1.4 Q0 7.3 0 5.9 V4.4 Q0 3.0 1.4 3.0 H5.6 V2.4 H2.5 Z" transform="rotate(180 5.35 5.4)"/><circle cx="3.9" cy="1.2" r="0.55" fill="#1e1e1e" fill-opacity="0.6"/><circle cx="6.8" cy="9.6" r="0.55" fill="#1e1e1e" fill-opacity="0.6"/></g>
<text x="87.4" y="518" font-family='"Liberation Sans", sans-serif' font-size="13" fill="#cccccc" font-weight="normal" font-style="normal" text-anchor="start" textLength="80.5" lengthAdjust="spacingAndGlyphs" >lessthan10.py</text>
<g transform="translate(69.4,529.8) scale(0.9818181818181819)" fill="#519aba"><path d="M2.5 1.6 Q2.5 0 4.1 0 H6.3 Q7.9 0 7.9 1.6 V5.0 H3.2 V7.3 H1.4 Q0 7.3 0 5.9 V4.4 Q0 3.0 1.4 3.0 H5.6 V2.4 H2.5 Z"/><path d="M2.5 1.6 Q2.5 0 4.1 0 H6.3 Q7.9 0 7.9 1.6 V5.0 H3.2 V7.3 H1.4 Q0 7.3 0 5.9 V4.4 Q0 3.0 1.4 3.0 H5.6 V2.4 H2.5 Z" transform="rotate(180 5.35 5.4)"/><circle cx="3.9" cy="1.2" r="0.55" fill="#1e1e1e" fill-opacity="0.6"/><circle cx="6.8" cy="9.6" r="0.55" fill="#1e1e1e" fill-opacity="0.6"/></g>
<text x="87.4" y="540" font-family='"Liberation Sans", sans-serif' font-size="13" fill="#cccccc" font-weight="normal" font-style="normal" text-anchor="start" textLength="66.8" lengthAdjust="spacingAndGlyphs" >listcomp.py</text>
<g transform="translate(69.4,551.8) scale(0.9818181818181819)" fill="#519aba"><path d="M2.5 1.6 Q2.5 0 4.1 0 H6.3 Q7.9 0 7.9 1.6 V5.0 H3.2 V7.3 H1.4 Q0 7.3 0 5.9 V4.4 Q0 3.0 1.4 3.0 H5.6 V2.4 H2.5 Z"/><path d="M2.5 1.6 Q2.5 0 4.1 0 H6.3 Q7.9 0 7.9 1.6 V5.0 H3.2 V7.3 H1.4 Q0 7.3 0 5.9 V4.4 Q0 3.0 1.4 3.0 H5.6 V2.4 H2.5 Z" transform="rotate(180 5.35 5.4)"/><circle cx="3.9" cy="1.2" r="0.55" fill="#1e1e1e" fill-opacity="0.6"/><circle cx="6.8" cy="9.6" r="0.55" fill="#1e1e1e" fill-opacity="0.6"/></g>
<text x="87.4" y="562" font-family='"Liberation Sans", sans-serif' font-size="13" fill="#cccccc" font-weight="normal" font-style="normal" text-anchor="start" textLength="62.3" lengthAdjust="spacingAndGlyphs" >listends.py</text>
<g transform="translate(69.4,573.8) scale(0.9818181818181819)" fill="#519aba"><path d="M2.5 1.6 Q2.5 0 4.1 0 H6.3 Q7.9 0 7.9 1.6 V5.0 H3.2 V7.3 H1.4 Q0 7.3 0 5.9 V4.4 Q0 3.0 1.4 3.0 H5.6 V2.4 H2.5 Z"/><path d="M2.5 1.6 Q2.5 0 4.1 0 H6.3 Q7.9 0 7.9 1.6 V5.0 H3.2 V7.3 H1.4 Q0 7.3 0 5.9 V4.4 Q0 3.0 1.4 3.0 H5.6 V2.4 H2.5 Z" transform="rotate(180 5.35 5.4)"/><circle cx="3.9" cy="1.2" r="0.55" fill="#1e1e1e" fill-opacity="0.6"/><circle cx="6.8" cy="9.6" r="0.55" fill="#1e1e1e" fill-opacity="0.6"/></g>
<text x="87.4" y="584" font-family='"Liberation Sans", sans-serif' font-size="13" fill="#cccccc" font-weight="normal" font-style="normal" text-anchor="start" textLength="60.8" lengthAdjust="spacingAndGlyphs" >overlap.py</text>
<g transform="translate(69.4,595.8) scale(0.9818181818181819)" fill="#519aba"><path d="M2.5 1.6 Q2.5 0 4.1 0 H6.3 Q7.9 0 7.9 1.6 V5.0 H3.2 V7.3 H1.4 Q0 7.3 0 5.9 V4.4 Q0 3.0 1.4 3.0 H5.6 V2.4 H2.5 Z"/><path d="M2.5 1.6 Q2.5 0 4.1 0 H6.3 Q7.9 0 7.9 1.6 V5.0 H3.2 V7.3 H1.4 Q0 7.3 0 5.9 V4.4 Q0 3.0 1.4 3.0 H5.6 V2.4 H2.5 Z" transform="rotate(180 5.35 5.4)"/><circle cx="3.9" cy="1.2" r="0.55" fill="#1e1e1e" fill-opacity="0.6"/><circle cx="6.8" cy="9.6" r="0.55" fill="#1e1e1e" fill-opacity="0.6"/></g>
<text x="87.4" y="606" font-family='"Liberation Sans", sans-serif' font-size="13" fill="#cccccc" font-weight="normal" font-style="normal" text-anchor="start" textLength="84.4" lengthAdjust="spacingAndGlyphs" >palindrome.py</text>
<g transform="translate(69.4,617.8) scale(0.9818181818181819)" fill="#519aba"><path d="M2.5 1.6 Q2.5 0 4.1 0 H6.3 Q7.9 0 7.9 1.6 V5.0 H3.2 V7.3 H1.4 Q0 7.3 0 5.9 V4.4 Q0 3.0 1.4 3.0 H5.6 V2.4 H2.5 Z"/><path d="M2.5 1.6 Q2.5 0 4.1 0 H6.3 Q7.9 0 7.9 1.6 V5.0 H3.2 V7.3 H1.4 Q0 7.3 0 5.9 V4.4 Q0 3.0 1.4 3.0 H5.6 V2.4 H2.5 Z" transform="rotate(180 5.35 5.4)"/><circle cx="3.9" cy="1.2" r="0.55" fill="#1e1e1e" fill-opacity="0.6"/><circle cx="6.8" cy="9.6" r="0.55" fill="#1e1e1e" fill-opacity="0.6"/></g>
<text x="87.4" y="628" font-family='"Liberation Sans", sans-serif' font-size="13" fill="#cccccc" font-weight="normal" font-style="normal" text-anchor="start" textLength="42.8" lengthAdjust="spacingAndGlyphs" >pass.py</text>
<g transform="translate(69.4,639.8) scale(0.9818181818181819)" fill="#519aba"><path d="M2.5 1.6 Q2.5 0 4.1 0 H6.3 Q7.9 0 7.9 1.6 V5.0 H3.2 V7.3 H1.4 Q0 7.3 0 5.9 V4.4 Q0 3.0 1.4 3.0 H5.6 V2.4 H2.5 Z"/><path d="M2.5 1.6 Q2.5 0 4.1 0 H6.3 Q7.9 0 7.9 1.6 V5.0 H3.2 V7.3 H1.4 Q0 7.3 0 5.9 V4.4 Q0 3.0 1.4 3.0 H5.6 V2.4 H2.5 Z" transform="rotate(180 5.35 5.4)"/><circle cx="3.9" cy="1.2" r="0.55" fill="#1e1e1e" fill-opacity="0.6"/><circle cx="6.8" cy="9.6" r="0.55" fill="#1e1e1e" fill-opacity="0.6"/></g>
<text x="87.4" y="650" font-family='"Liberation Sans", sans-serif' font-size="13" fill="#cccccc" font-weight="normal" font-style="normal" text-anchor="start" textLength="51.1" lengthAdjust="spacingAndGlyphs" >prime.py</text>
<g transform="translate(69.4,661.8) scale(0.9818181818181819)" fill="#519aba"><path d="M2.5 1.6 Q2.5 0 4.1 0 H6.3 Q7.9 0 7.9 1.6 V5.0 H3.2 V7.3 H1.4 Q0 7.3 0 5.9 V4.4 Q0 3.0 1.4 3.0 H5.6 V2.4 H2.5 Z"/><path d="M2.5 1.6 Q2.5 0 4.1 0 H6.3 Q7.9 0 7.9 1.6 V5.0 H3.2 V7.3 H1.4 Q0 7.3 0 5.9 V4.4 Q0 3.0 1.4 3.0 H5.6 V2.4 H2.5 Z" transform="rotate(180 5.35 5.4)"/><circle cx="3.9" cy="1.2" r="0.55" fill="#1e1e1e" fill-opacity="0.6"/><circle cx="6.8" cy="9.6" r="0.55" fill="#1e1e1e" fill-opacity="0.6"/></g>
<text x="87.4" y="672" font-family='"Liberation Sans", sans-serif' font-size="13" fill="#cccccc" font-weight="normal" font-style="normal" text-anchor="start" textLength="28.8" lengthAdjust="spacingAndGlyphs" >r1.py</text>
<g transform="translate(69.4,683.8) scale(0.9818181818181819)" fill="#519aba"><path d="M2.5 1.6 Q2.5 0 4.1 0 H6.3 Q7.9 0 7.9 1.6 V5.0 H3.2 V7.3 H1.4 Q0 7.3 0 5.9 V4.4 Q0 3.0 1.4 3.0 H5.6 V2.4 H2.5 Z"/><path d="M2.5 1.6 Q2.5 0 4.1 0 H6.3 Q7.9 0 7.9 1.6 V5.0 H3.2 V7.3 H1.4 Q0 7.3 0 5.9 V4.4 Q0 3.0 1.4 3.0 H5.6 V2.4 H2.5 Z" transform="rotate(180 5.35 5.4)"/><circle cx="3.9" cy="1.2" r="0.55" fill="#1e1e1e" fill-opacity="0.6"/><circle cx="6.8" cy="9.6" r="0.55" fill="#1e1e1e" fill-opacity="0.6"/></g>
<text x="87.4" y="694" font-family='"Liberation Sans", sans-serif' font-size="13" fill="#cccccc" font-weight="normal" font-style="normal" text-anchor="start" textLength="36" lengthAdjust="spacingAndGlyphs" >rev.py</text>
</g>
<path d="M62.2 696.2 L65.8 698.75 L62.2 701.3 Z" fill="none" stroke="#c5c5c5" stroke-width="1.3"/>
<text x="73.6" y="703" font-family='"Liberation Sans", sans-serif' font-size="11" fill="#cccccc" font-weight="bold" font-style="normal" text-anchor="start" textLength="47" lengthAdjust="spacingAndGlyphs" >OUTLINE</text>
<g fill="none" stroke="#ffffff" stroke-width="2.2" stroke-linejoin="round"><path d="M19.2 67.5 H27.5 L33 73 V84.8 H19.2 Z"/></g>
<path d="M27 66.4 V73.6 H34.1 Z" fill="#ffffff"/>
<path d="M22.5 63.8 H31.2 L36.6 69.2 V81.5" fill="none" stroke="#ffffff" stroke-width="2.2" stroke-linejoin="round"/>
<circle cx="31" cy="120.8" r="7.4" fill="none" stroke="#a0a0a0" stroke-width="2.2"/>
<path d="M25.6 126.2 L17.6 134.2" stroke="#a0a0a0" stroke-width="3" stroke-linecap="round"/>
<g fill="none" stroke="#a0a0a0" stroke-width="1.7"><circle cx="21.8" cy="163.7" r="3"/><circle cx="34" cy="163.7" r="3"/><circle cx="26.3" cy="184" r="3"/></g>
<path d="M21.8 166.5 V169 L27.8 175.5 L34 169 V166.5 M27.8 175 V181" fill="none" stroke="#a0a0a0" stroke-width="3.2" stroke-linejoin="round"/>
<circle cx="35.9" cy="182.7" r="9" fill="#007acc"/>
<text x="35.9" y="187.2" font-family='"Liberation Sans", sans-serif' font-size="12" fill="#ffffff" font-weight="normal" font-style="normal" text-anchor="middle" >2</text>
<circle cx="28" cy="223.9" r="12.6" fill="none" stroke="#a8a8a8" stroke-width="2.5"/>
<g fill="#a8a8a8"><circle cx="24.8" cy="227.2" r="3.6"/><circle cx="31.6" cy="220.4" r="3.2"/></g>
<g stroke="#a8a8a8" stroke-width="1.6" fill="none" stroke-linecap="square"><path d="M17.6 223.6 H22 M26 215.5 V219.5 M27.5 232.5 V228.8 M33.5 220.6 H36.7 V223 M30.5 214.8 V217.5"/></g>
<path d="M19.4 215.3 L36.6 232.5" stroke="#333333" stroke-width="4.6"/>
<path d="M19 214.9 L37 232.9" stroke="#a8a8a8" stroke-width="2.3"/>
<g fill="#b0b0b0"><path d="M16.9 262.8 H27 V267.1 H21 V280.6 H27 V284.8 H16.9 Z"/><path d="M29 262.8 H39.1 V273.4 H35.6 V266.3 H29 Z"/><path d="M35 275.2 H39.1 V284.8 H29 V280.6 H35 Z"/><rect x="23" y="268.9" width="10.1" height="10"/></g>
<g fill="#a8a8a8"><rect x="25.8" y="674" width="4.4" height="5" transform="rotate(0 28 685)"/><rect x="25.8" y="674" width="4.4" height="5" transform="rotate(45 28 685)"/><rect x="25.8" y="674" width="4.4" height="5" transform="rotate(90 28 685)"/><rect x="25.8" y="674" width="4.4" height="5" transform="rotate(135 28 685)"/><rect x="25.8" y="674" width="4.4" height="5" transform="rotate(180 28 685)"/><rect x="25.8" y="674" width="4.4" height="5" transform="rotate(225 28 685)"/><rect x="25.8" y="674" width="4.4" height="5" transform="rotate(270 28 685)"/><rect x="25.8" y="674" width="4.4" height="5" transform="rotate(315 28 685)"/><circle cx="28" cy="685" r="7.8"/></g>
<circle cx="28" cy="685" r="3.2" fill="#333333"/>
<g fill="none" stroke="#ffffff" stroke-width="1.2"><circle cx="20" cy="716.7" r="1.7"/><circle cx="25.2" cy="718.3" r="1.7"/><circle cx="20" cy="725.3" r="1.7"/><path d="M20 718.4 V723.6 M25.2 720 Q25 723 20.6 723.6"/></g>
<text x="30" y="725.2" font-family='"Liberation Sans", sans-serif' font-size="12.5" fill="#ffffff" font-weight="normal" font-style="normal" text-anchor="start" textLength="43.4" lengthAdjust="spacingAndGlyphs" >master*</text>
<circle cx="92.5" cy="720.8" r="5.6" fill="#ffffff"/>
<path d="M90.2 718.5 L94.8 723.1 M94.8 718.5 L90.2 723.1" stroke="#007acc" stroke-width="1.6"/>
<text x="103" y="725.2" font-family='"Liberation Sans", sans-serif' font-size="12.5" fill="#ffffff" font-weight="normal" font-style="normal" text-anchor="start" textLength="5.7" lengthAdjust="spacingAndGlyphs" >0</text>
<path d="M119.4 715.3 L125 726.2 H113.8 Z" fill="#ffffff"/>
<path d="M119.4 719 V722.6 M119.4 723.8 V725" stroke="#007acc" stroke-width="1.4"/>
<text x="129.7" y="725.2" font-family='"Liberation Sans", sans-serif' font-size="12.5" fill="#ffffff" font-weight="normal" font-style="normal" text-anchor="start" textLength="5.8" lengthAdjust="spacingAndGlyphs" >0</text>
<text x="702.6" y="725.2" font-family='"Liberation Sans", sans-serif' font-size="12.5" fill="#ffffff" font-weight="normal" font-style="normal" text-anchor="start" textLength="53.0" lengthAdjust="spacingAndGlyphs" >Ln 1, Col 1</text>
<text x="772.5" y="725.2" font-family='"Liberation Sans", sans-serif' font-size="12.5" fill="#ffffff" font-weight="normal" font-style="normal" text-anchor="start" textLength="49.5" lengthAdjust="spacingAndGlyphs" >Spaces: 4</text>
<text x="837.5" y="725.2" font-family='"Liberation Sans", sans-serif' font-size="12.5" fill="#ffffff" font-weight="normal" font-style="normal" text-anchor="start" textLength="32.0" lengthAdjust="spacingAndGlyphs" >UTF-8</text>
<text x="884.8" y="725.2" font-family='"Liberation Sans", sans-serif' font-size="12.5" fill="#ffffff" font-weight="normal" font-style="normal" text-anchor="start" textLength="11.9" lengthAdjust="spacingAndGlyphs" >LF</text>
<text x="912.3" y="725.2" font-family='"Liberation Sans", sans-serif' font-size="12.5" fill="#ffffff" font-weight="normal" font-style="normal" text-anchor="start" textLength="38.7" lengthAdjust="spacingAndGlyphs" >Python</text>
<circle cx="975" cy="721" r="6.9" fill="#ffffff"/>
<g fill="#007acc"><ellipse cx="972.6" cy="718.3" rx="1" ry="1.2"/><ellipse cx="977.4" cy="718.3" rx="1" ry="1.2"/></g>
<path d="M970.8 722.3 Q975 727.2 979.2 722.3" fill="none" stroke="#007acc" stroke-width="1.4"/>
<path d="M1005 714.6 Q1008.3 714.8 1008.6 719.5 L1009 722.8 L1011.3 725 H998.8 L1001.1 722.8 L1001.5 719.5 Q1001.8 714.8 1005 714.6 Z" fill="#ffffff"/>
<path d="M1003 725.6 H1007 Q1006.5 727.4 1005 727.4 Q1003.5 727.4 1003 725.6 Z" fill="#ffffff"/>
<clipPath id="mmclip"><rect x="938" y="84" width="75" height="626"/></clipPath>
<g opacity="0.38" clip-path="url(#mmclip)"><rect x="939" y="84" width="5" height="2" fill="#dcdcaa"/><rect x="944" y="84" width="1" height="2" fill="#d4d4d4"/><rect x="945" y="84" width="5" height="2" fill="#ce9178"/><rect x="951" y="84" width="7" height="2" fill="#ce9178"/><rect x="959" y="84" width="3" height="2" fill="#ce9178"/><rect x="963" y="84" width="7" height="2" fill="#ce9178"/><rect x="971" y="84" width="4" height="2" fill="#ce9178"/><rect x="976" y="84" width="2" height="2" fill="#ce9178"/><rect x="979" y="84" width="8" height="2" fill="#ce9178"/><rect x="988" y="84" width="2" height="2" fill="#ce9178"/><rect x="991" y="84" width="6" height="2" fill="#ce9178"/><rect x="998" y="84" width="6" height="2" fill="#ce9178"/><rect x="1004" y="84" width="1" height="2" fill="#d4d4d4"/><rect x="939" y="90" width="3" height="2" fill="#569cd6"/><rect x="943" y="90" width="5" height="2" fill="#dcdcaa"/><rect x="948" y="90" width="1" height="2" fill="#d4d4d4"/><rect x="949" y="90" width="1" height="2" fill="#9cdcfe"/><rect x="950" y="90" width="2" height="2" fill="#d4d4d4"/><rect x="943" y="94" width="3" height="2" fill="#c586c0"/><rect x="947" y="94" width="4" height="2" fill="#d4d4d4"/><rect x="952" y="94" width="2" height="2" fill="#569cd6"/><rect x="955" y="94" width="4" height="2" fill="#4ec9b0"/><rect x="959" y="94" width="4" height="2" fill="#d4d4d4"/><rect x="947" y="98" width="2" height="2" fill="#c586c0"/><rect x="950" y="98" width="5" height="2" fill="#d4d4d4"/><rect x="955" y="98" width="7" height="2" fill="#dcdcaa"/><rect x="962" y="98" width="3" height="2" fill="#d4d4d4"/><rect x="951" y="100" width="5" height="2" fill="#dcdcaa"/><rect x="956" y="100" width="1" height="2" fill="#d4d4d4"/><rect x="957" y="100" width="6" height="2" fill="#ce9178"/><rect x="964" y="100" width="3" height="2" fill="#ce9178"/><rect x="968" y="100" width="11" height="2" fill="#ce9178"/><rect x="979" y="100" width="2" height="2" fill="#d9aa7a"/><rect x="981" y="100" width="1" height="2" fill="#ce9178"/><rect x="982" y="100" width="1" height="2" fill="#d4d4d4"/><rect x="951" y="102" width="6" height="2" fill="#dcdcaa"/><rect x="957" y="102" width="2" height="2" fill="#d4d4d4"/><rect x="951" y="104" width="5" height="2" fill="#c586c0"/><rect x="947" y="108" width="4" height="2" fill="#c586c0"/><rect x="951" y="108" width="1" height="2" fill="#d4d4d4"/><rect x="951" y="110" width="6" height="2" fill="#569cd6"/><rect x="958" y="110" width="3" height="2" fill="#d4d4d4"/><rect x="951" y="112" width="3" height="2" fill="#d4d4d4"/><rect x="955" y="112" width="1" height="2" fill="#d4d4d4"/><rect x="957" y="112" width="3" height="2" fill="#4ec9b0"/><rect x="960" y="112" width="3" height="2" fill="#d4d4d4"/><rect x="951" y="114" width="5" height="2" fill="#c586c0"/><rect x="939" y="118" width="3" height="2" fill="#569cd6"/><rect x="943" y="118" width="6" height="2" fill="#dcdcaa"/><rect x="949" y="118" width="3" height="2" fill="#d4d4d4"/><rect x="943" y="120" width="4" height="2" fill="#d4d4d4"/><rect x="948" y="120" width="1" height="2" fill="#d4d4d4"/><rect x="950" y="120" width="3" height="2" fill="#4ec9b0"/><rect x="953" y="120" width="1" height="2" fill="#d4d4d4"/><rect x="954" y="120" width="5" height="2" fill="#dcdcaa"/><rect x="959" y="120" width="1" height="2" fill="#d4d4d4"/><rect x="960" y="120" width="7" height="2" fill="#ce9178"/><rect x="968" y="120" width="5" height="2" fill="#ce9178"/><rect x="974" y="120" width="3" height="2" fill="#ce9178"/><rect x="978" y="120" width="6" height="2" fill="#ce9178"/><rect x="985" y="120" width="3" height="2" fill="#ce9178"/><rect x="989" y="120" width="4" height="2" fill="#ce9178"/><rect x="994" y="120" width="2" height="2" fill="#ce9178"/><rect x="997" y="120" width="8" height="2" fill="#ce9178"/><rect x="1005" y="120" width="2" height="2" fill="#d9aa7a"/><rect x="1007" y="120" width="1" height="2" fill="#ce9178"/><rect x="1008" y="120" width="2" height="2" fill="#d4d4d4"/><rect x="943" y="122" width="4" height="2" fill="#d4d4d4"/><rect x="948" y="122" width="1" height="2" fill="#d4d4d4"/><rect x="950" y="122" width="5" height="2" fill="#d4d4d4"/><rect x="955" y="122" width="6" height="2" fill="#dcdcaa"/><rect x="961" y="122" width="1" height="2" fill="#d4d4d4"/><rect x="962" y="122" width="3" height="2" fill="#ce9178"/><rect x="965" y="122" width="1" height="2" fill="#d4d4d4"/><rect x="943" y="124" width="2" height="2" fill="#c586c0"/><rect x="946" y="124" width="3" height="2" fill="#ce9178"/><rect x="950" y="124" width="2" height="2" fill="#569cd6"/><rect x="953" y="124" width="5" height="2" fill="#d4d4d4"/><rect x="947" y="126" width="5" height="2" fill="#dcdcaa"/><rect x="952" y="126" width="1" height="2" fill="#d4d4d4"/><rect x="953" y="126" width="3" height="2" fill="#ce9178"/><rect x="957" y="126" width="3" height="2" fill="#ce9178"/><rect x="961" y="126" width="5" height="2" fill="#ce9178"/><rect x="967" y="126" width="1" height="2" fill="#ce9178"/><rect x="969" y="126" width="7" height="2" fill="#ce9178"/><rect x="977" y="126" width="7" height="2" fill="#ce9178"/><rect x="984" y="126" width="2" height="2" fill="#d9aa7a"/><rect x="986" y="126" width="1" height="2" fill="#ce9178"/><rect x="987" y="126" width="1" height="2" fill="#d4d4d4"/><rect x="947" y="128" width="6" height="2" fill="#dcdcaa"/><rect x="953" y="128" width="2" height="2" fill="#d4d4d4"/><rect x="943" y="130" width="4" height="2" fill="#c586c0"/><rect x="947" y="130" width="1" height="2" fill="#d4d4d4"/><rect x="947" y="132" width="5" height="2" fill="#dcdcaa"/><rect x="952" y="132" width="6" height="2" fill="#d4d4d4"/><rect x="939" y="136" width="6" height="2" fill="#dcdcaa"/><rect x="945" y="136" width="2" height="2" fill="#d4d4d4"/><rect x="939" y="140" width="5" height="2" fill="#6a9955"/><rect x="945" y="140" width="4" height="2" fill="#6a9955"/><rect x="950" y="140" width="6" height="2" fill="#6a9955"/><rect x="957" y="140" width="3" height="2" fill="#6a9955"/><rect x="961" y="140" width="6" height="2" fill="#6a9955"/><rect x="968" y="140" width="7" height="2" fill="#6a9955"/><rect x="939" y="142" width="3" height="2" fill="#d4d4d4"/><rect x="943" y="142" width="1" height="2" fill="#d4d4d4"/><rect x="945" y="142" width="2" height="2" fill="#d4d4d4"/><rect x="939" y="146" width="5" height="2" fill="#6a9955"/><rect x="945" y="146" width="2" height="2" fill="#6a9955"/><rect x="948" y="146" width="4" height="2" fill="#6a9955"/><rect x="953" y="146" width="2" height="2" fill="#6a9955"/><rect x="956" y="146" width="3" height="2" fill="#6a9955"/><rect x="960" y="146" width="3" height="2" fill="#6a9955"/><rect x="964" y="146" width="6" height="2" fill="#6a9955"/><rect x="971" y="146" width="2" height="2" fill="#6a9955"/><rect x="974" y="146" width="6" height="2" fill="#6a9955"/><rect x="981" y="146" width="2" height="2" fill="#6a9955"/><rect x="984" y="146" width="3" height="2" fill="#6a9955"/><rect x="988" y="146" width="6" height="2" fill="#6a9955"/><rect x="995" y="146" width="5" height="2" fill="#6a9955"/><rect x="939" y="148" width="3" height="2" fill="#c586c0"/><rect x="943" y="148" width="5" height="2" fill="#d4d4d4"/><rect x="949" y="148" width="2" height="2" fill="#569cd6"/><rect x="952" y="148" width="5" height="2" fill="#dcdcaa"/><rect x="957" y="148" width="1" height="2" fill="#d4d4d4"/><rect x="958" y="148" width="3" height="2" fill="#b5cea8"/><rect x="961" y="148" width="2" height="2" fill="#d4d4d4"/><rect x="943" y="150" width="2" height="2" fill="#c586c0"/><rect x="946" y="150" width="3" height="2" fill="#d4d4d4"/><rect x="950" y="150" width="1" height="2" fill="#d4d4d4"/><rect x="952" y="150" width="1" height="2" fill="#b5cea8"/><rect x="954" y="150" width="2" height="2" fill="#d4d4d4"/><rect x="957" y="150" width="6" height="2" fill="#d4d4d4"/><rect x="947" y="152" width="2" height="2" fill="#c586c0"/><rect x="950" y="152" width="1" height="2" fill="#d4d4d4"/><rect x="952" y="152" width="2" height="2" fill="#569cd6"/><rect x="955" y="152" width="5" height="2" fill="#dcdcaa"/><rect x="960" y="152" width="8" height="2" fill="#d4d4d4"/><rect x="951" y="154" width="4" height="2" fill="#d4d4d4"/><rect x="955" y="154" width="6" height="2" fill="#dcdcaa"/><rect x="961" y="154" width="1" height="2" fill="#d4d4d4"/><rect x="962" y="154" width="1" height="2" fill="#b5cea8"/><rect x="963" y="154" width="1" height="2" fill="#d4d4d4"/><rect x="947" y="156" width="5" height="2" fill="#c586c0"/><rect x="939" y="160" width="9" height="2" fill="#6a9955"/><rect x="949" y="160" width="3" height="2" fill="#6a9955"/><rect x="953" y="160" width="4" height="2" fill="#6a9955"/><rect x="958" y="160" width="6" height="2" fill="#6a9955"/><rect x="965" y="160" width="7" height="2" fill="#6a9955"/><rect x="973" y="160" width="2" height="2" fill="#6a9955"/><rect x="976" y="160" width="4" height="2" fill="#6a9955"/><rect x="981" y="160" width="2" height="2" fill="#6a9955"/><rect x="984" y="160" width="1" height="2" fill="#6a9955"/><rect x="986" y="160" width="6" height="2" fill="#6a9955"/><rect x="993" y="160" width="6" height="2" fill="#6a9955"/><rect x="1000" y="160" width="2" height="2" fill="#6a9955"/><rect x="1003" y="160" width="3" height="2" fill="#6a9955"/><rect x="1007" y="160" width="4" height="2" fill="#6a9955"/><rect x="1012" y="160" width="2" height="2" fill="#6a9955"/><rect x="1015" y="160" width="1" height="2" fill="#6a9955"/><rect x="1017" y="160" width="3" height="2" fill="#6a9955"/><rect x="1021" y="160" width="2" height="2" fill="#6a9955"/><rect x="1024" y="160" width="2" height="2" fill="#6a9955"/><rect x="1027" y="160" width="1" height="2" fill="#6a9955"/><rect x="939" y="162" width="5" height="2" fill="#d4d4d4"/><rect x="945" y="162" width="1" height="2" fill="#d4d4d4"/><rect x="947" y="162" width="3" height="2" fill="#dcdcaa"/><rect x="950" y="162" width="5" height="2" fill="#d4d4d4"/><rect x="956" y="162" width="1" height="2" fill="#d4d4d4"/><rect x="958" y="162" width="1" height="2" fill="#b5cea8"/><rect x="939" y="166" width="4" height="2" fill="#d4d4d4"/><rect x="943" y="166" width="1" height="2" fill="#b5cea8"/><rect x="944" y="166" width="1" height="2" fill="#d4d4d4"/><rect x="946" y="166" width="1" height="2" fill="#d4d4d4"/><rect x="948" y="166" width="1" height="2" fill="#b5cea8"/><rect x="939" y="168" width="3" height="2" fill="#d4d4d4"/><rect x="943" y="168" width="2" height="2" fill="#d4d4d4"/><rect x="946" y="168" width="1" height="2" fill="#b5cea8"/><rect x="948" y="168" width="2" height="2" fill="#d4d4d4"/><rect x="951" y="168" width="5" height="2" fill="#d4d4d4"/><rect x="939" y="170" width="5" height="2" fill="#d4d4d4"/><rect x="945" y="170" width="2" height="2" fill="#d4d4d4"/><rect x="948" y="170" width="1" height="2" fill="#b5cea8"/><rect x="939" y="174" width="4" height="2" fill="#6a9955"/><rect x="944" y="174" width="3" height="2" fill="#6a9955"/><rect x="948" y="174" width="5" height="2" fill="#6a9955"/><rect x="939" y="176" width="5" height="2" fill="#6a9955"/><rect x="945" y="176" width="5" height="2" fill="#6a9955"/><rect x="939" y="178" width="4" height="2" fill="#6a9955"/><rect x="944" y="178" width="2" height="2" fill="#6a9955"/><rect x="947" y="178" width="4" height="2" fill="#6a9955"/><rect x="939" y="180" width="3" height="2" fill="#6a9955"/><rect x="943" y="180" width="3" height="2" fill="#6a9955"/><rect x="947" y="180" width="1" height="2" fill="#6a9955"/><rect x="949" y="180" width="5" height="2" fill="#6a9955"/><rect x="955" y="180" width="2" height="2" fill="#6a9955"/><rect x="958" y="180" width="4" height="2" fill="#6a9955"/><rect x="939" y="184" width="5" height="2" fill="#c586c0"/><rect x="945" y="184" width="3" height="2" fill="#d4d4d4"/><rect x="949" y="184" width="1" height="2" fill="#d4d4d4"/><rect x="951" y="184" width="1" height="2" fill="#b5cea8"/><rect x="952" y="184" width="1" height="2" fill="#d4d4d4"/><rect x="943" y="186" width="5" height="2" fill="#6a9955"/><rect x="949" y="186" width="2" height="2" fill="#6a9955"/><rect x="952" y="186" width="7" height="2" fill="#6a9955"/><rect x="960" y="186" width="2" height="2" fill="#6a9955"/><rect x="963" y="186" width="3" height="2" fill="#6a9955"/><rect x="967" y="186" width="3" height="2" fill="#6a9955"/><rect x="971" y="186" width="3" height="2" fill="#6a9955"/><rect x="975" y="186" width="6" height="2" fill="#6a9955"/><rect x="982" y="186" width="2" height="2" fill="#6a9955"/><rect x="985" y="186" width="1" height="2" fill="#6a9955"/><rect x="987" y="186" width="3" height="2" fill="#6a9955"/><rect x="991" y="186" width="4" height="2" fill="#6a9955"/><rect x="996" y="186" width="3" height="2" fill="#6a9955"/><rect x="1000" y="186" width="4" height="2" fill="#6a9955"/><rect x="943" y="188" width="3" height="2" fill="#6a9955"/><rect x="947" y="188" width="1" height="2" fill="#6a9955"/><rect x="949" y="188" width="6" height="2" fill="#6a9955"/><rect x="956" y="188" width="5" height="2" fill="#6a9955"/><rect x="962" y="188" width="2" height="2" fill="#6a9955"/><rect x="965" y="188" width="10" height="2" fill="#6a9955"/><rect x="976" y="188" width="4" height="2" fill="#6a9955"/><rect x="981" y="188" width="3" height="2" fill="#6a9955"/><rect x="985" y="188" width="6" height="2" fill="#6a9955"/><rect x="943" y="190" width="2" height="2" fill="#c586c0"/><rect x="946" y="190" width="3" height="2" fill="#d4d4d4"/><rect x="950" y="190" width="1" height="2" fill="#d4d4d4"/><rect x="952" y="190" width="1" height="2" fill="#b5cea8"/><rect x="954" y="190" width="2" height="2" fill="#d4d4d4"/><rect x="957" y="190" width="5" height="2" fill="#d4d4d4"/><rect x="963" y="190" width="2" height="2" fill="#d4d4d4"/><rect x="966" y="190" width="1" height="2" fill="#b5cea8"/><rect x="968" y="190" width="3" height="2" fill="#569cd6"/><rect x="972" y="190" width="3" height="2" fill="#d4d4d4"/><rect x="976" y="190" width="1" height="2" fill="#d4d4d4"/><rect x="978" y="190" width="1" height="2" fill="#b5cea8"/><rect x="979" y="190" width="1" height="2" fill="#d4d4d4"/><rect x="947" y="192" width="5" height="2" fill="#c586c0"/><rect x="943" y="194" width="4" height="2" fill="#c586c0"/><rect x="948" y="194" width="3" height="2" fill="#d4d4d4"/><rect x="952" y="194" width="1" height="2" fill="#d4d4d4"/><rect x="954" y="194" width="1" height="2" fill="#b5cea8"/><rect x="956" y="194" width="2" height="2" fill="#d4d4d4"/><rect x="959" y="194" width="5" height="2" fill="#d4d4d4"/><rect x="965" y="194" width="2" height="2" fill="#d4d4d4"/><rect x="968" y="194" width="1" height="2" fill="#b5cea8"/><rect x="969" y="194" width="1" height="2" fill="#d4d4d4"/><rect x="947" y="196" width="3" height="2" fill="#d4d4d4"/><rect x="951" y="196" width="1" height="2" fill="#d4d4d4"/><rect x="953" y="196" width="3" height="2" fill="#d4d4d4"/><rect x="957" y="196" width="1" height="2" fill="#d4d4d4"/><rect x="959" y="196" width="1" height="2" fill="#b5cea8"/><rect x="960" y="196" width="7" height="2" fill="#d4d4d4"/><rect x="947" y="198" width="4" height="2" fill="#6a9955"/><rect x="951" y="198" width="8" height="2" fill="#d4d4d4"/><rect x="959" y="198" width="1" height="2" fill="#b5cea8"/><rect x="960" y="198" width="1" height="2" fill="#d4d4d4"/><rect x="947" y="200" width="6" height="2" fill="#6a9955"/><rect x="954" y="200" width="3" height="2" fill="#6a9955"/><rect x="947" y="202" width="4" height="2" fill="#d4d4d4"/><rect x="951" y="202" width="6" height="2" fill="#dcdcaa"/><rect x="957" y="202" width="1" height="2" fill="#d4d4d4"/><rect x="958" y="202" width="1" height="2" fill="#b5cea8"/><rect x="959" y="202" width="1" height="2" fill="#d4d4d4"/><rect x="947" y="204" width="5" height="2" fill="#d4d4d4"/><rect x="953" y="204" width="2" height="2" fill="#d4d4d4"/><rect x="956" y="204" width="1" height="2" fill="#b5cea8"/><rect x="943" y="206" width="3" height="2" fill="#6a9955"/><rect x="947" y="206" width="3" height="2" fill="#6a9955"/><rect x="951" y="206" width="6" height="2" fill="#6a9955"/><rect x="958" y="206" width="2" height="2" fill="#6a9955"/><rect x="961" y="206" width="4" height="2" fill="#6a9955"/><rect x="966" y="206" width="4" height="2" fill="#6a9955"/><rect x="971" y="206" width="1" height="2" fill="#6a9955"/><rect x="973" y="206" width="2" height="2" fill="#6a9955"/><rect x="976" y="206" width="3" height="2" fill="#6a9955"/><rect x="980" y="206" width="5" height="2" fill="#6a9955"/><rect x="943" y="208" width="4" height="2" fill="#c586c0"/><rect x="948" y="208" width="3" height="2" fill="#d4d4d4"/><rect x="952" y="208" width="1" height="2" fill="#d4d4d4"/><rect x="954" y="208" width="1" height="2" fill="#b5cea8"/><rect x="955" y="208" width="1" height="2" fill="#d4d4d4"/><rect x="947" y="210" width="4" height="2" fill="#d4d4d4"/><rect x="951" y="210" width="6" height="2" fill="#dcdcaa"/><rect x="957" y="210" width="1" height="2" fill="#d4d4d4"/><rect x="958" y="210" width="1" height="2" fill="#b5cea8"/><rect x="959" y="210" width="1" height="2" fill="#d4d4d4"/><rect x="943" y="212" width="5" height="2" fill="#d4d4d4"/><rect x="949" y="212" width="2" height="2" fill="#d4d4d4"/><rect x="952" y="212" width="1" height="2" fill="#b5cea8"/><rect x="939" y="216" width="5" height="2" fill="#6a9955"/><rect x="945" y="216" width="2" height="2" fill="#6a9955"/><rect x="948" y="216" width="2" height="2" fill="#6a9955"/><rect x="951" y="216" width="5" height="2" fill="#6a9955"/><rect x="957" y="216" width="3" height="2" fill="#6a9955"/><rect x="961" y="216" width="6" height="2" fill="#6a9955"/><rect x="968" y="216" width="4" height="2" fill="#6a9955"/><rect x="973" y="216" width="2" height="2" fill="#6a9955"/><rect x="976" y="216" width="3" height="2" fill="#6a9955"/><rect x="980" y="216" width="6" height="2" fill="#6a9955"/><rect x="987" y="216" width="3" height="2" fill="#6a9955"/><rect x="991" y="216" width="8" height="2" fill="#6a9955"/><rect x="1000" y="216" width="2" height="2" fill="#6a9955"/><rect x="1003" y="216" width="1" height="2" fill="#6a9955"/><rect x="1005" y="216" width="4" height="2" fill="#6a9955"/><rect x="939" y="218" width="5" height="2" fill="#dcdcaa"/><rect x="944" y="218" width="1" height="2" fill="#d4d4d4"/><rect x="945" y="218" width="4" height="2" fill="#ce9178"/><rect x="950" y="218" width="6" height="2" fill="#ce9178"/><rect x="957" y="218" width="4" height="2" fill="#ce9178"/><rect x="962" y="218" width="2" height="2" fill="#ce9178"/><rect x="965" y="218" width="1" height="2" fill="#ce9178"/><rect x="967" y="218" width="1" height="2" fill="#d4d4d4"/><rect x="969" y="218" width="3" height="2" fill="#4ec9b0"/><rect x="972" y="218" width="6" height="2" fill="#d4d4d4"/><rect x="979" y="218" width="1" height="2" fill="#d4d4d4"/><rect x="981" y="218" width="1" height="2" fill="#ce9178"/><rect x="983" y="218" width="4" height="2" fill="#ce9178"/><rect x="987" y="218" width="1" height="2" fill="#d4d4d4"/><rect x="948" y="220" width="3" height="2" fill="#ce9178"/><rect x="952" y="220" width="3" height="2" fill="#ce9178"/><rect x="956" y="220" width="5" height="2" fill="#ce9178"/><rect x="962" y="220" width="2" height="2" fill="#ce9178"/><rect x="965" y="220" width="3" height="2" fill="#ce9178"/><rect x="969" y="220" width="4" height="2" fill="#ce9178"/><rect x="974" y="220" width="2" height="2" fill="#ce9178"/><rect x="977" y="220" width="1" height="2" fill="#ce9178"/><rect x="979" y="220" width="3" height="2" fill="#ce9178"/><rect x="983" y="220" width="2" height="2" fill="#ce9178"/><rect x="986" y="220" width="3" height="2" fill="#4ec9b0"/><rect x="989" y="220" width="2" height="2" fill="#d4d4d4"/><rect x="939" y="222" width="5" height="2" fill="#dcdcaa"/><rect x="944" y="222" width="5" height="2" fill="#d4d4d4"/></g>
<rect x="969" y="674" width="51" height="25" fill="#e6962a" fill-opacity="0.4"/>
<rect x="969" y="699" width="51" height="25.5" fill="#5aa0e6" fill-opacity="0.4"/>
<text x="973.8" y="693" font-family='"Liberation Sans", sans-serif' font-size="14" fill="#7a7a7a" font-weight="bold" font-style="normal" text-anchor="start" textLength="42.4" lengthAdjust="spacingAndGlyphs" >FOSS</text>
<text x="974" y="717.4" font-family='"Liberation Sans", sans-serif' font-size="15" fill="#d8d8d8" font-weight="bold" font-style="normal" text-anchor="start" textLength="43" lengthAdjust="spacingAndGlyphs" fill-opacity="0.45">Linux</text>
<!--BODY-->
</svg>
</body></html>
